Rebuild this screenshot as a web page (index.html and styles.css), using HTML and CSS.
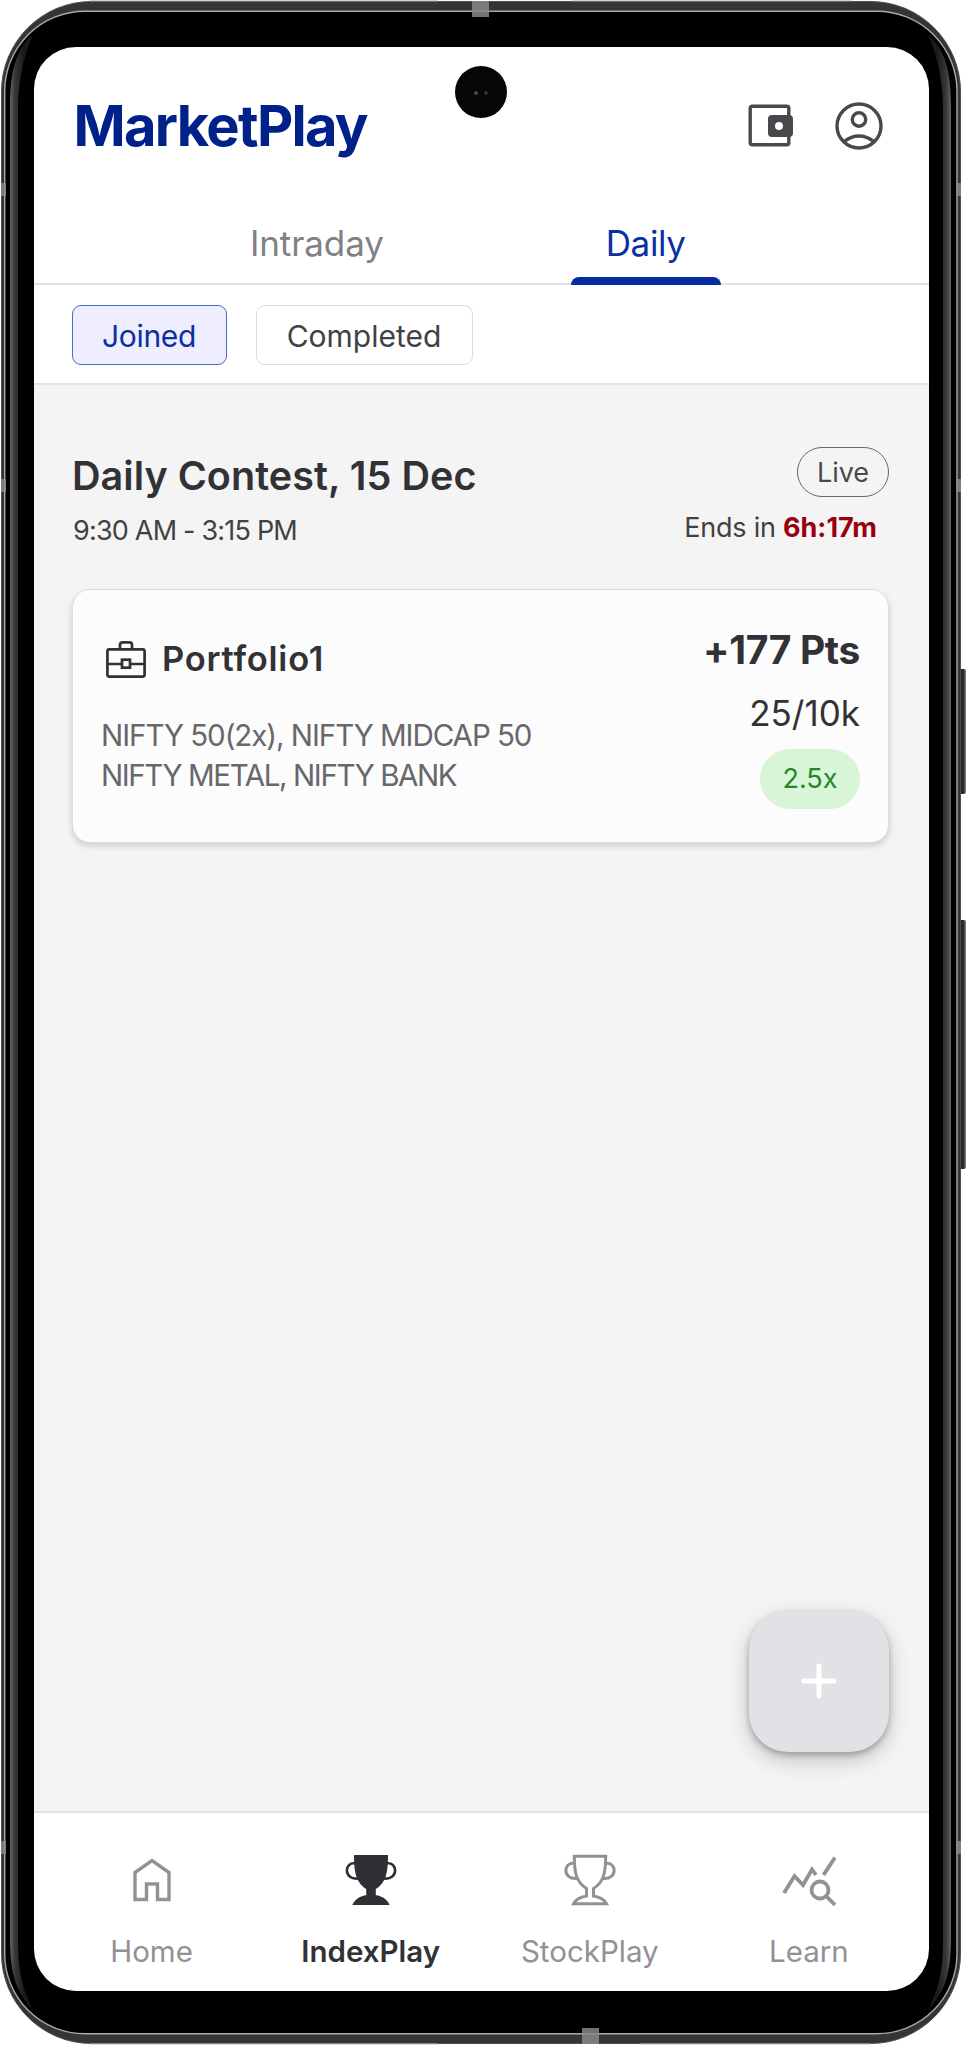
FILE: index.html
```html
<!DOCTYPE html>
<html lang="en">
<head>
<meta charset="utf-8">
<title>MarketPlay</title>
<link rel="stylesheet" href="styles.css">
</head>
<body>
<div class="device">
  <svg class="frame" width="967" height="2045" viewBox="0 0 967 2045">
    <defs>
      <linearGradient id="bezelL"><stop offset="0" stop-color="#666"/><stop offset=".2" stop-color="#393939"/><stop offset=".6" stop-color="#1a1a1a"/></linearGradient>
      <linearGradient id="bezelR"><stop offset=".4" stop-color="#1a1a1a"/><stop offset=".8" stop-color="#393939"/><stop offset="1" stop-color="#666"/></linearGradient>
      <linearGradient id="button"><stop offset="0" stop-color="#777"/><stop offset=".3" stop-color="#222"/><stop offset=".7" stop-color="#333"/><stop offset="1" stop-color="#888"/></linearGradient>
    </defs>
    <rect x="959" y="669" width="7" height="125" rx="2" fill="url(#button)"/>
    <rect x="959" y="920" width="7" height="249" rx="2" fill="url(#button)"/>
    <rect x="1.5" y="1.5" width="959" height="2042" rx="90" fill="#353535" stroke="#4c4f4e"/>
    <path d="M90 .8H438M571 .8H852M90 2044H438M640 2044H870" stroke="#b9beba"/>
    <rect x="4.7" y="11.2" width="952.3" height="2022.6" rx="80" fill="#000" stroke="#aaa" stroke-width="1.4"/>
    <path d="M33 34C14 52 10 75 10 110V1935C10 1970 14 1990 33 2010C20 1985 18 1965 18 1935V110C18 85 22 60 33 34Z" fill="url(#bezelL)"/>
    <path d="M928 34C947 52 951 75 951 110V1935C951 1970 947 1990 928 2010C941 1985 943 1965 943 1935V110C943 85 939 60 928 34Z" fill="url(#bezelR)"/>
    <path d="M472 1h17v16h-17zM582 2028h17v16h-17zM1 183h5v13H1zM1 479h5v13H1zM1 1841h5v13H1zM956 183h5v13h-5zM956 479h5v13h-5zM956 1841h5v13h-5z" fill="#888" fill-opacity=".85"/>
  </svg>
  <main class="screen">
    <header class="header">
      <h1 class="brand">MarketPlay</h1>
      <svg class="icon" width="46" height="44" viewBox="0 0 46 44" fill="none" stroke="#49484d" stroke-width="3.4"><rect x="2.2" y="2.2" width="38.600" height="38.600" rx="2"/><rect x="20" y="11" width="25" height="22" rx="4" fill="#49484d" stroke="none"/><circle cx="31" cy="22" r="4" fill="#fff" stroke="none"/></svg>
      <svg class="icon" width="48" height="48" viewBox="0 0 48 48" fill="none" stroke="#49484d" stroke-width="3.4"><circle cx="24" cy="24" r="22"/><circle cx="24" cy="17.500" r="6.700"/><path d="M9 39.500Q24 28.500 39 39.500"/></svg>
    </header>
    <nav class="tabs">
      <a class="tab">Intraday</a>
      <a class="tab on">Daily</a>
    </nav>
    <div class="chips">
      <button class="chip on">Joined</button>
      <button class="chip wide">Completed</button>
    </div>
    <section class="content">
      <div class="row">
        <h2 class="title">Daily Contest, 15 Dec</h2>
        <div class="live">Live</div>
      </div>
      <div class="row meta">
        <p class="time">9:30 AM - 3:15 PM</p>
        <p class="ends">Ends in <b>6h:17m</b></p>
      </div>
      <article class="card">
        <div class="left">
          <div class="name"><svg width="40" height="37" viewBox="0 0 40 37" fill="none" stroke="#323135" stroke-width="2.700"><rect x="1.400" y="8.400" width="37.200" height="27.200" rx="2"/><path d="M14 8V4Q14 1.400 16.500 1.400H23.500Q26 1.400 26 4V8M1 23H15.500M24.500 23H39"/><rect x="16" y="18.700" width="8" height="8"/></svg><h3>Portfolio1</h3></div>
          <p class="stocks">NIFTY 50(2x), NIFTY MIDCAP 50</p>
          <p class="stocks second">NIFTY METAL, NIFTY BANK</p>
        </div>
        <div class="right">
          <div class="pts">+177 Pts</div>
          <div class="rank">25/10k</div>
          <div class="mult">2.5x</div>
        </div>
      </article>
      <button class="fab" aria-label="Add"><svg width="36" height="36" viewBox="0 0 36 36" stroke="#fff" stroke-width="5" stroke-linecap="round"><path d="M18 3V33M3 18H33"/></svg></button>
    </section>
    <nav class="bottom">
      <a class="item"><svg width="54" height="54" viewBox="0 0 54 54" fill="none" stroke="#929196" stroke-width="3.400"><path d="M10 18.500L27 6.500L44 18.500V45.500H32.500V30H21.500V45.500H10Z"/></svg><span>Home</span></a>
      <a class="item on"><svg width="54" height="54" viewBox="0 0 54 54" fill="none" stroke="#302f34" stroke-width="2.600"><path fill="#302f34" d="M11.300 2.300H42.700C42.700 18 41 28 30.500 34.500V42C36 43 41 45 43.500 49.700H10.500C13 45 18 43 23.500 42V34.500C13 28 11.300 18 11.300 2.300Z"/><path d="M12 9.500C0 7 -1 26 14 24.500M42 9.500C54 7 55 26 40 24.500"/></svg><span>IndexPlay</span></a>
      <a class="item"><svg width="54" height="54" viewBox="0 0 54 54" fill="none" stroke="#929196" stroke-width="3"><path d="M11.300 2.300H42.700C42.700 18 41 28 30.500 34.500V42C36 43 41 45 43.500 49.700H10.500C13 45 18 43 23.500 42V34.500C13 28 11.300 18 11.300 2.300Z"/><path d="M12 9.500C0 7 -1 26 14 24.500M42 9.500C54 7 55 26 40 24.500"/></svg><span>StockPlay</span></a>
      <a class="item"><svg width="54" height="54" viewBox="0 0 54 54" fill="none" stroke="#929196" stroke-width="3.800"><path d="M2 39L12.500 22L21 31L30 15.500L34 21M41.500 21L53 3.500"/><circle cx="38" cy="36" r="8.500"/><path d="M44 42L53 51"/></svg><span>Learn</span></a>
    </nav>
    <div class="camera"></div>
  </main>
</div>
</body>
</html>
```
FILE: styles.css
```css
* { box-sizing: border-box; }
body { margin: 0; background: #fff; font-family: Inter, "Liberation Sans", sans-serif; color: #323135; }
h1, h2, h3, p { margin: 0; }
button { font: inherit; margin: 0; padding: 0; border: 0; }
.device { position: relative; width: 967px; height: 2045px; padding: 46.5px 38px 54.5px 33.5px; overflow: hidden; }
.frame { position: absolute; inset: 0; }
.screen { position: relative; height: 1944px; display: flex; flex-direction: column; overflow: hidden; border-radius: 42px; background: #fff; }
.header { height: 158px; flex: none; display: flex; align-items: center; padding: 1px 46px 0 40px; }
.brand { flex: 1; font-size: 56px; font-weight: 700; line-height: 66px; letter-spacing: -1.7px; color: #00208a; }
.icon { flex: none; margin-left: 41px; }
.tabs { height: 80.500px; flex: none; display: flex; padding: 0 119px; border-bottom: 2px solid #e3e2e8; }
.tab { flex: 1; display: flex; justify-content: center; padding-top: 17px; font-size: 35px; line-height: 42px; letter-spacing: -.1px; color: #808085; }
.tab.on { color: #0a30a4; position: relative; letter-spacing: -.4px; }
.tab.on::after { content: ""; position: absolute; left: 50%; bottom: -2px; width: 150px; height: 8px; margin-left: -75px; border-radius: 8px 8px 0 0; background: #062da0; }
.chips { height: 100px; flex: none; display: flex; gap: 29px; padding: 20px 38px; border-bottom: 2px solid #e3e2e8; }
.chip { width: 155px; height: 60px; border: 1.500px solid #ddd; border-radius: 9px; background: #fff; font-size: 30px; line-height: 56px; padding-top: 2px; color: #414145; white-space: nowrap; }
.chip.wide { width: 217px; }
.chip.on { border-color: #4a6cc7; background: #eeeefe; color: #0a30a4; letter-spacing: -.3px; }
.content { flex: 1; min-height: 0; position: relative; background: #f4f4f4; padding: 62px 40px 0 38.500px; }
.row { display: flex; justify-content: space-between; }
.title { font-size: 39.500px; line-height: 50px; padding-top: 4px; font-weight: 600; letter-spacing: .05px; white-space: nowrap; }
.live { width: 92px; height: 50px; border: 1.500px solid #68676b; border-radius: 25px; text-align: center; font-size: 27px; line-height: 49px; color: #49484d; }
.meta { height: 88px; padding: 7px 12px 0 1px; font-size: 27px; line-height: 40px; color: #414145; }
.time { padding-top: 3px; letter-spacing: -.8px; }
.ends { letter-spacing: -.25px; }
.ends b { color: #98000f; font-weight: 700; letter-spacing: 0; }
.card { height: 254px; border: 1px solid #dcdcdc; border-radius: 18px; background: #fcfcfc; box-shadow: 0 3px 6px rgba(0,0,0,.16); display: flex; justify-content: space-between; padding: 0 28px; }
.name { display: flex; align-items: center; gap: 16px; height: 44px; margin: 47px 0 0 5px; font-size: 34.500px; line-height: 44px; }
.name h3 { font-size: inherit; font-weight: 600; letter-spacing: .75px; }
.stocks { margin-top: 34px; font-size: 29.500px; line-height: 40px; letter-spacing: -1.05px; color: #68676b; white-space: nowrap; }
.stocks.second { margin-top: 0; letter-spacing: -1.4px; }
.right { display: flex; flex-direction: column; align-items: flex-end; padding-top: 36px; }
.pts { font-size: 39px; line-height: 48px; font-weight: 700; letter-spacing: -.35px; }
.rank { font-size: 35px; line-height: 50px; margin: 14px 0 10.500px; }
.mult { width: 100px; height: 60px; border-radius: 30px; background: #d8f5d8; color: #288529; text-align: center; font-size: 27px; line-height: 60px; }
.fab { position: absolute; right: 40px; bottom: 59px; width: 140px; height: 141px; border-radius: 39px; background: #e2e1e6; display: flex; align-items: center; justify-content: center; box-shadow: 0 3px 6px rgba(0,0,0,.25), 0 8px 22px rgba(0,0,0,.2); }
.bottom { height: 180px; flex: none; display: flex; border-top: 2px solid #e3e2e8; padding: 41px 10.500px 0 8.500px; }
.item { flex: 1; display: flex; flex-direction: column; align-items: center; font-size: 29.500px; line-height: 40px; color: #929196; }
.item svg { margin-bottom: 23px; }
.item.on { color: #323135; font-weight: 600; }
.camera { position: absolute; left: 421px; top: 19px; width: 52px; height: 52px; border-radius: 50%; background: radial-gradient(circle at 21px 27px, #555 0 1px, transparent 2.500px), radial-gradient(circle at 31px 27px, #16405f 0 1px, transparent 2.500px), #060606; }
```
